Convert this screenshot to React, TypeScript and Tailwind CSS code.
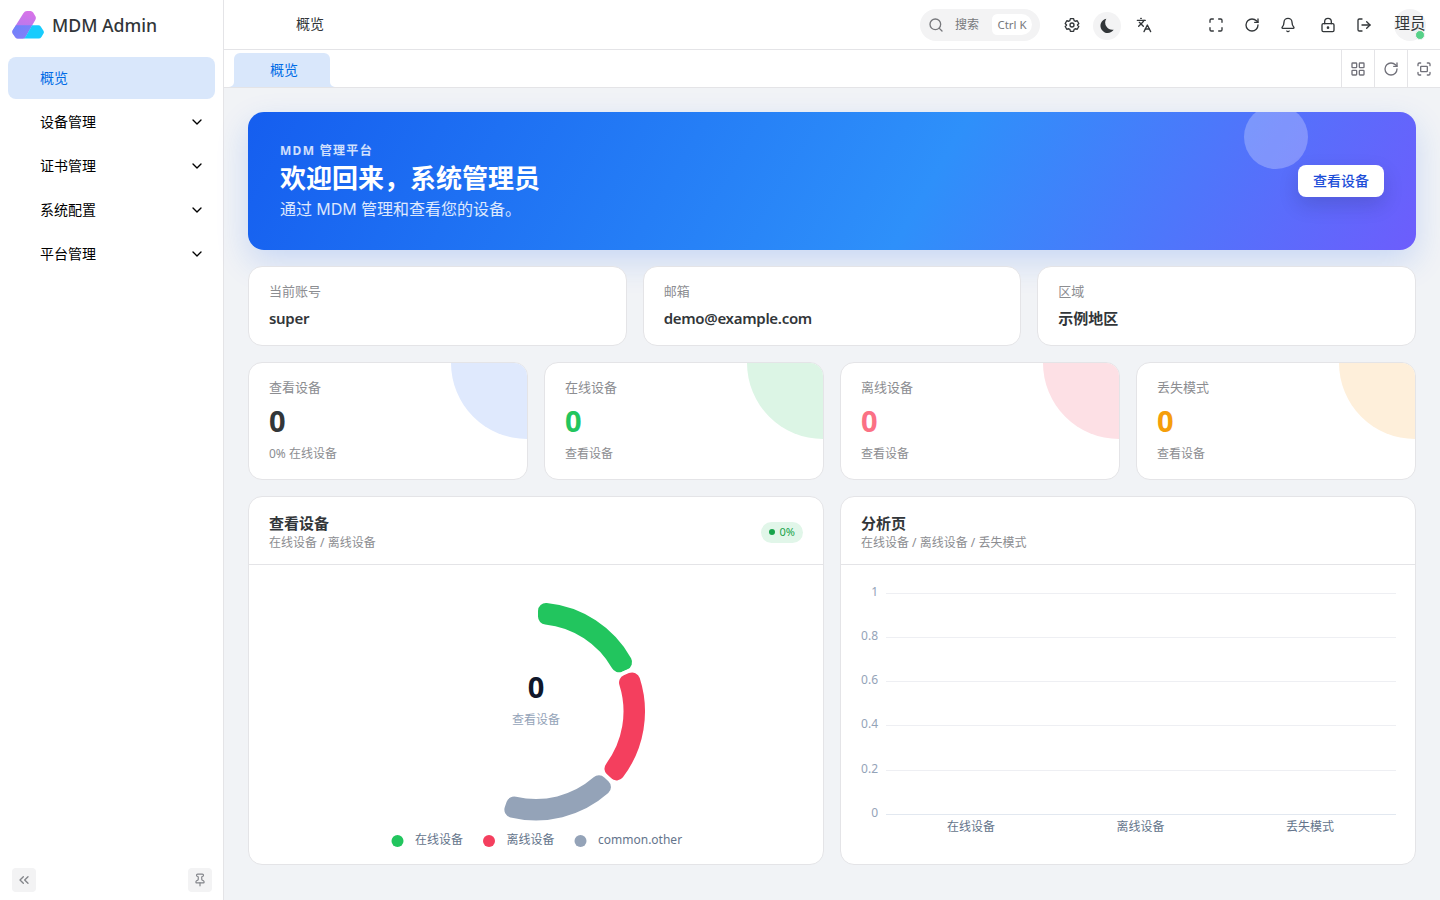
import type { ReactNode } from "react";
import {
  Bell,
  ChevronDown,
  ChevronsLeft,
  Fullscreen,
  Languages,
  LayoutGrid,
  LockKeyhole,
  LogOut,
  Maximize,
  Pin,
  RotateCw,
  Search,
} from "lucide-react";

const menus = ["设备管理", "证书管理", "系统配置", "平台管理"];

const infos = [
  { label: "当前账号", value: "super" },
  { label: "邮箱", value: "demo@example.com" },
  { label: "区域", value: "示例地区" },
];

const stats = [
  { label: "查看设备", hint: "0% 在线设备", color: "text-[#323639]", blob: "bg-[#dfe9fd]" },
  { label: "在线设备", hint: "查看设备", color: "text-[#22c55e]", blob: "bg-[#dcf5e5]" },
  { label: "离线设备", hint: "查看设备", color: "text-[#fb7185]", blob: "bg-[#fde0e5]" },
  { label: "丢失模式", hint: "查看设备", color: "text-[#f59e0b]", blob: "bg-[#feefda]" },
];

const slices = [
  { name: "在线设备", color: "#22c55e", x: 148.5 },
  { name: "离线设备", color: "#f43f5e", x: 240 },
  { name: "common.other", color: "#94a3b8", x: 331.5 },
];

const ticks = [
  { label: "1", y: 28.5 },
  { label: "0.8", y: 72.5 },
  { label: "0.6", y: 116.5 },
  { label: "0.4", y: 160.5 },
  { label: "0.2", y: 205.5 },
  { label: "0", y: 249.5 },
];

const CX = 287;
const CY = 146.5;

function polar(radius: number, angle: number) {
  return `${CX + radius * Math.sin(angle)} ${CY - radius * Math.cos(angle)}`;
}

// ring sector with rounded corners, angles in degrees clockwise from the top
function sectorPath(from: number, to: number, outer = 111, inner = 85.5, c = 10) {
  const a = (from * Math.PI) / 180;
  const b = (to * Math.PI) / 180;
  const dOut = Math.asin(c / (outer - c));
  const dIn = Math.asin(c / (inner + c));
  const rOut = (outer - c) * Math.cos(dOut);
  const rIn = (inner + c) * Math.cos(dIn);
  return [
    `M ${polar(rOut, a)}`,
    `A ${c} ${c} 0 0 1 ${polar(outer, a + dOut)}`,
    `A ${outer} ${outer} 0 0 1 ${polar(outer, b - dOut)}`,
    `A ${c} ${c} 0 0 1 ${polar(rOut, b)}`,
    `L ${polar(rIn, b)}`,
    `A ${c} ${c} 0 0 1 ${polar(inner, b - dIn)}`,
    `A ${inner} ${inner} 0 0 0 ${polar(inner, a + dIn)}`,
    `A ${c} ${c} 0 0 1 ${polar(rIn, a)}`,
    "Z",
  ].join(" ");
}

function Logo() {
  return (
    <svg width="32" height="28" viewBox="0.5 0.5 31 27.500" preserveAspectRatio="none">
      <defs>
        <linearGradient id="logo-a" x1="0.6" y1="0" x2="0.4" y2="1">
          <stop offset="0" stopColor="#d873e8" />
          <stop offset="1" stopColor="#a67cf0" />
        </linearGradient>
        <linearGradient id="logo-b" x1="0" y1="0" x2="1" y2="1">
          <stop offset="0" stopColor="#6b84fb" />
          <stop offset="1" stopColor="#8a7df8" />
        </linearGradient>
      </defs>
      <path
        d="M11.500 2.800Q12.800 0.500 15 0.500H18.500Q20 0.500 21 2L23.300 6Q24 7.500 23.200 9L13.500 26Q12.500 27.500 11 27.500H6Q4.500 27.500 3.700 26.300L1.200 22.500Q0.400 21 1.200 19.500Z"
        fill="url(#logo-a)"
      />
      <path d="M4.300 14.500H20L13.500 26Q12.500 27.500 11 27.500H6Q4.500 27.500 3.700 26.300L1.200 22.500Q0.400 21 1.200 19.500Z" fill="url(#logo-b)" />
      <path
        d="M20 14.500H26Q27.500 14.500 28.300 15.700L31 20Q31.800 21.300 31 22.700L29 26Q28 27.500 26.500 27.500H11.500Q12.800 27.300 13.500 26Z"
        fill="#18ccfd"
      />
    </svg>
  );
}

function GearIcon() {
  return (
    <svg width="16" height="16" viewBox="0 0 24 24" fill="none" stroke="currentColor" strokeWidth="2" strokeLinejoin="round">
      <path d="M9.600 2.500h4.800l.8 2.900 1.700 1 2.900-.8 2.400 4.200-2.100 2.200 2.100 2.200-2.400 4.200-2.900-.8-1.700 1-.8 2.900H9.600l-.8-2.900-1.700-1-2.900.8-2.400-4.200L3.900 12 1.800 9.800l2.400-4.200 2.900.8 1.700-1z" />
      <circle cx="12" cy="12" r="3" />
    </svg>
  );
}

function MoonIcon() {
  return (
    <svg width="16" height="16" viewBox="0 0 16 16" fill="currentColor">
      <path d="M7.300 0.700A7.200 7.200 0 1 0 14.700 11.700 7.300 7.300 0 0 1 7.300 0.700Z" />
    </svg>
  );
}

function IconButton({ children, className = "" }: { children: ReactNode; className?: string }) {
  return (
    <button className={`flex h-8 w-8 items-center justify-center rounded-full ${className}`}>
      {children}
    </button>
  );
}

function Sidebar() {
  return (
    <aside className="flex w-[224px] shrink-0 flex-col border-r border-[#e4e4e7] bg-white">
      <div className="flex h-[50px] items-center gap-2 px-3">
        <Logo />
        <span className="pb-px text-[17.7px] font-medium leading-7">MDM Admin</span>
      </div>
      <nav className="flex flex-col gap-0.5 px-2 pt-[7px] text-sm text-black">
        <a className="flex h-[42px] items-center rounded-lg bg-[#d9e7fb] pl-8 text-[#006be6]">概览</a>
        {menus.map((name) => (
          <a key={name} className="flex h-[42px] items-center justify-between pl-8 pr-[10px]">
            {name}
            <ChevronDown size={16} />
          </a>
        ))}
      </nav>
      <div className="mt-auto flex justify-between px-3 pb-2 pr-[11px] text-[#83858a]">
        <button className="flex h-6 w-6 items-center justify-center rounded bg-[#f3f3f4]">
          <ChevronsLeft size={16} />
        </button>
        <button className="flex h-6 w-6 items-center justify-center rounded bg-[#f3f3f4]">
          <Pin size={14} />
        </button>
      </div>
    </aside>
  );
}

function Header() {
  return (
    <header className="flex h-[50px] shrink-0 items-center border-b border-[#e4e4e7] bg-white pl-[72px] pr-[14px]">
      <span className="pb-px text-sm">概览</span>
      <div className="ml-auto mr-4 flex h-8 w-[120px] items-center rounded-2xl bg-[#f3f3f4] pl-2 text-[#77787c]">
        <Search size={16} />
        <span className="ml-[11px] text-xs">搜索</span>
        <span className="ml-[13px] flex h-[21px] w-10 items-center justify-center rounded-md rounded-r-xl bg-white text-[11.5px]">
          Ctrl K
        </span>
      </div>
      <div className="flex items-center">
        <IconButton>
          <GearIcon />
        </IconButton>
        <button className="ml-[5px] mr-[3px] mt-0.5 flex h-7 w-7 items-center justify-center rounded-full bg-[#f3f3f4] pr-px">
          <MoonIcon />
        </button>
        <IconButton className="ml-1">
          <Languages size={16} />
        </IconButton>
        <IconButton className="ml-10">
          <Maximize size={16} />
        </IconButton>
        <IconButton className="ml-1">
          <RotateCw size={16} />
        </IconButton>
        <IconButton className="ml-1">
          <Bell size={16} />
        </IconButton>
        <IconButton className="ml-2">
          <LockKeyhole size={16} />
        </IconButton>
        <IconButton className="ml-1">
          <LogOut size={16} />
        </IconButton>
        <div className="relative ml-[14px] flex h-8 w-8 items-center justify-center rounded-full bg-[#f3f3f4]">
          <span className="shrink-0 whitespace-nowrap pb-0.5 text-[15.5px]">理员</span>
          <span className="absolute bottom-[1px] right-[1px] h-[10px] w-[10px] rounded-full border border-[#f3f3f4] bg-[#57d188]" />
        </div>
      </div>
    </header>
  );
}

function Tabbar() {
  return (
    <div className="flex h-[38px] shrink-0 items-end border-b border-[#e4e4e7] bg-white pl-[5px]">
      <svg width="5" height="5" viewBox="0 0 5 5" className="text-[#d9e7fb]">
        <path d="M5 0V5H0A5 5 0 0 0 5 0Z" fill="currentColor" />
      </svg>
      <div className="flex h-[34px] w-24 items-center justify-center rounded-t-md bg-[#d9e7fb] pb-px pl-1 text-sm text-[#006be6]">
        概览
      </div>
      <svg width="5" height="5" viewBox="0 0 5 5" className="text-[#d9e7fb]">
        <path d="M0 0V5H5A5 5 0 0 1 0 0Z" fill="currentColor" />
      </svg>
      <div className="ml-auto flex h-full text-[#71717a]">
        <span className="flex w-[33px] items-center justify-center border-l border-[#e4e4e7]">
          <LayoutGrid size={16} />
        </span>
        <span className="flex w-[33px] items-center justify-center border-l border-[#e4e4e7]">
          <RotateCw size={16} />
        </span>
        <span className="flex w-[33px] items-center justify-center border-l border-[#e4e4e7]">
          <Fullscreen size={16} />
        </span>
      </div>
    </div>
  );
}

function Hero() {
  return (
    <section className="relative flex h-[138px] shrink-0 items-center justify-between overflow-hidden rounded-2xl bg-[linear-gradient(120deg,#155eef_0%,#2e90fa_58%,#6d5dfc_100%)] px-8 text-white">
      <span className="absolute -top-[7px] right-[108px] h-16 w-16 rounded-full bg-white/25" />
      <div>
        <p className="text-xs font-bold leading-[18px] tracking-[1.3px] text-white/80">MDM 管理平台</p>
        <h1 className="mt-px text-[26px] font-bold leading-[34px]">欢迎回来，系统管理员</h1>
        <p className="mt-[2px] text-[16px] leading-6 text-white/85">通过 MDM 管理和查看您的设备。</p>
      </div>
      <button className="relative h-8 w-[86px] rounded-lg bg-white text-sm font-medium text-[#1d4ed8] shadow-[0_8px_20px_rgba(15,23,42,0.16)]">
        查看设备
      </button>
    </section>
  );
}

function DeviceChart() {
  const step = 66.4;
  return (
    <svg width="574" height="299" viewBox="0 0 574 299">
      {slices.map((s, i) => (
        <path
          key={s.name}
          d={sectorPath(i * step, (i + 1) * step)}
          fill={s.color}
          stroke="#fff"
          strokeWidth="4"
        />
      ))}
      <text x={CX} y="133" textAnchor="middle" fontSize="29" fontWeight="700" fill="#0f172a">
        0
      </text>
      <text x={CX} y="159" textAnchor="middle" fontSize="12" fill="#94a3b8">
        查看设备
      </text>
      {slices.map((s) => (
        <g key={s.name}>
          <circle cx={s.x} cy="276" r="6" fill={s.color} />
          <text x={s.x + 17.5} y="279" fontSize="12" fill="#64748b">
            {s.name}
          </text>
        </g>
      ))}
    </svg>
  );
}

function AnalyticsChart() {
  return (
    <svg width="574" height="299" viewBox="0 0 574 299">
      {ticks.map((t) => (
        <g key={t.label}>
          <line x1="45" x2="555" y1={t.y} y2={t.y} stroke={t.label === "0" ? "#e2e8f0" : "#eeeff3"} />
          <text x="37" y={t.y + 2.5} textAnchor="end" fontSize="12" fill="#94a3b8">
            {t.label}
          </text>
        </g>
      ))}
      {["在线设备", "离线设备", "丢失模式"].map((name, i) => (
        <text key={name} x={130 + i * 169.5} y="266" textAnchor="middle" fontSize="12" fill="#64748b">
          {name}
        </text>
      ))}
    </svg>
  );
}

function ChartCard(props: { title: string; sub: string; extra?: ReactNode; children: ReactNode }) {
  return (
    <section className="h-[369px] overflow-hidden rounded-[14px] border border-[#e4e4e7] bg-white">
      <div className="flex h-[68px] items-center justify-between border-b border-[#e4e4e7] px-5">
        <div className="pt-1">
          <h2 className="text-[15px] font-semibold leading-[20px]">{props.title}</h2>
          <p className="text-xs leading-[19px] text-[#8c8d91]">{props.sub}</p>
        </div>
        {props.extra}
      </div>
      {props.children}
    </section>
  );
}

export default function App() {
  return (
    <div className="flex h-[900px] w-[1440px] overflow-hidden font-['Noto_Sans','Noto_Sans_CJK_SC',sans-serif] text-[#323639]">
      <Sidebar />
      <div className="flex min-w-0 flex-1 flex-col">
        <Header />
        <Tabbar />
        <main className="flex flex-1 flex-col gap-4 bg-[#f1f3f6] p-6">
          <div className="rounded-2xl shadow-[0_12px_32px_rgba(21,94,239,0.18)]">
            <Hero />
          </div>
          <div className="relative grid grid-cols-3 gap-4">
            {infos.map((item) => (
              <div key={item.label} className="h-20 rounded-[14px] border border-[#e4e4e7] bg-white px-5 pt-[15px]">
                <p className="text-[13px] leading-[19px] text-[#8c8d91]">{item.label}</p>
                <p
                  className={`mt-[6px] text-[15px] font-semibold leading-[22px] ${
                    item.label === "区域" ? "" : "tracking-[-0.3px]"
                  }`}
                >
                  {item.value}
                </p>
              </div>
            ))}
          </div>
          <div className="grid grid-cols-4 gap-4">
            {stats.map((item) => (
              <div
                key={item.label}
                className="relative h-[118px] overflow-hidden rounded-[14px] border border-[#e4e4e7] bg-white px-5 pt-[15px]"
              >
                <span className={`absolute right-0 top-0 h-[76px] w-[76px] rounded-bl-full ${item.blob}`} />
                <p className="text-[13px] leading-[19px] text-[#8c8d91]">{item.label}</p>
                <p className={`mt-[7px] text-[29px] font-bold leading-[34px] ${item.color}`}>0</p>
                <p className="mt-[7px] text-xs leading-[18px] text-[#8c8d91]">{item.hint}</p>
              </div>
            ))}
          </div>
          <div className="grid grid-cols-2 gap-4">
            <ChartCard
              title="查看设备"
              sub="在线设备 / 离线设备"
              extra={
                <span className="mt-[3px] flex h-[21px] items-center gap-[5px] rounded-full bg-[#e1f6e9] px-2 text-[11px] text-[#16a34a]">
                  <i className="h-[6px] w-[6px] rounded-full bg-[#16a34a]" />
                  0%
                </span>
              }
            >
              <DeviceChart />
            </ChartCard>
            <ChartCard title="分析页" sub="在线设备 / 离线设备 / 丢失模式">
              <AnalyticsChart />
            </ChartCard>
          </div>
        </main>
      </div>
    </div>
  );
}
